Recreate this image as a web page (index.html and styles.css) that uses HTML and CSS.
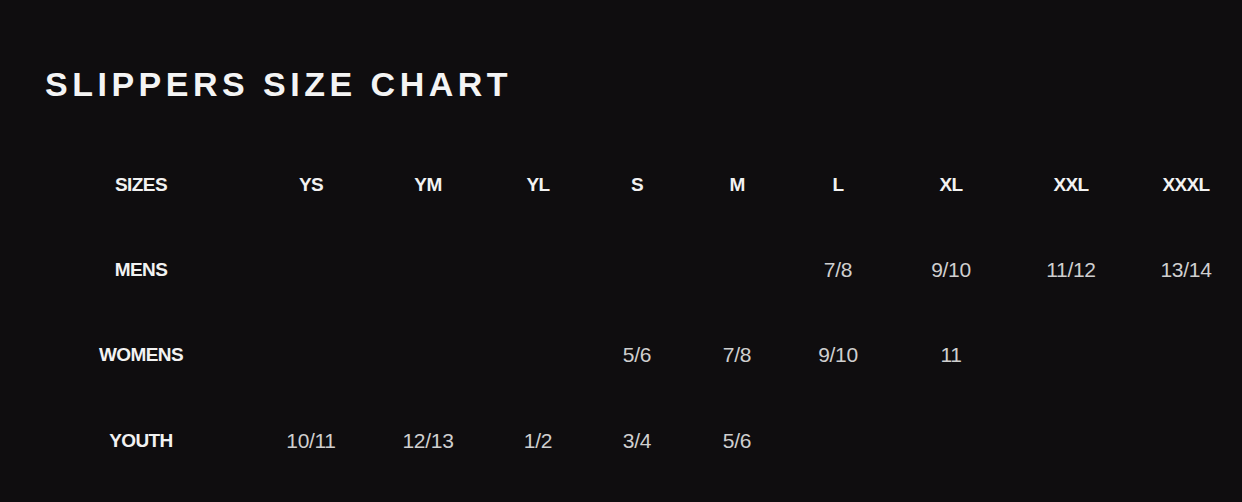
FILE: index.html
```html
<!DOCTYPE html>
<html lang="en">
<head>
<meta charset="utf-8">
<title>Slippers Size Chart</title>
<link rel="stylesheet" href="styles.css">
</head>
<body>
<main class="page">
  <h1 class="title">SLIPPERS SIZE CHART</h1>
  <div class="chart">
    <div class="cell head">SIZES</div>
    <div class="cell head">YS</div>
    <div class="cell head">YM</div>
    <div class="cell head">YL</div>
    <div class="cell head">S</div>
    <div class="cell head">M</div>
    <div class="cell head">L</div>
    <div class="cell head">XL</div>
    <div class="cell head">XXL</div>
    <div class="cell head">XXXL</div>

    <div class="cell head">MENS</div>
    <div class="cell"></div>
    <div class="cell"></div>
    <div class="cell"></div>
    <div class="cell"></div>
    <div class="cell"></div>
    <div class="cell">7/8</div>
    <div class="cell">9/10</div>
    <div class="cell">11/12</div>
    <div class="cell">13/14</div>

    <div class="cell head">WOMENS</div>
    <div class="cell"></div>
    <div class="cell"></div>
    <div class="cell"></div>
    <div class="cell">5/6</div>
    <div class="cell">7/8</div>
    <div class="cell">9/10</div>
    <div class="cell">11</div>
    <div class="cell"></div>
    <div class="cell"></div>

    <div class="cell head">YOUTH</div>
    <div class="cell">10/11</div>
    <div class="cell">12/13</div>
    <div class="cell">1/2</div>
    <div class="cell">3/4</div>
    <div class="cell">5/6</div>
    <div class="cell"></div>
    <div class="cell"></div>
    <div class="cell"></div>
    <div class="cell"></div>
  </div>
</main>
</body>
</html>
```

FILE: styles.css
```css
html, body {
  margin: 0;
  padding: 0;
  background: #0f0d0f;
  overflow: hidden;
}

.page {
  width: 1242px;
  height: 502px;
  box-sizing: border-box;
  padding: 61px 0 0 0;
  font-family: "Liberation Sans", Arial, sans-serif;
  color: #f2f2f2;
}

.title {
  margin: 0 0 0 45px;
  font-size: 34px;
  line-height: 46px;
  font-weight: 700;
  letter-spacing: 4.5px;
  color: #f4f4f4;
}

/* content tracks (96px) alternate with spacer tracks so each column
   is centred where the reference has it */
.chart {
  margin: 35px 0 0 93px;
  display: grid;
  grid-template-columns:
    96px 74px 96px 21px 96px 14px 96px 3px 96px 4px
    96px 5px 96px 17px 96px 24px 96px 19px 96px;
  grid-auto-rows: 85.3px;
}

.cell {
  display: flex;
  align-items: center;
  justify-content: center;
  font-family: "Liberation Sans", sans-serif;
  font-size: 21px;
  letter-spacing: -0.3px;
  color: #cfcfcf;
}

.cell:nth-child(10n+1) { grid-column: 1; }
.cell:nth-child(10n+2) { grid-column: 3; }
.cell:nth-child(10n+3) { grid-column: 5; }
.cell:nth-child(10n+4) { grid-column: 7; }
.cell:nth-child(10n+5) { grid-column: 9; }
.cell:nth-child(10n+6) { grid-column: 11; }
.cell:nth-child(10n+7) { grid-column: 13; }
.cell:nth-child(10n+8) { grid-column: 15; }
.cell:nth-child(10n+9) { grid-column: 17; }
.cell:nth-child(10n+10) { grid-column: 19; }

.head {
  font-weight: 700;
  font-size: 19px;
  letter-spacing: -0.6px;
  color: #f2f2f2;
}
```
